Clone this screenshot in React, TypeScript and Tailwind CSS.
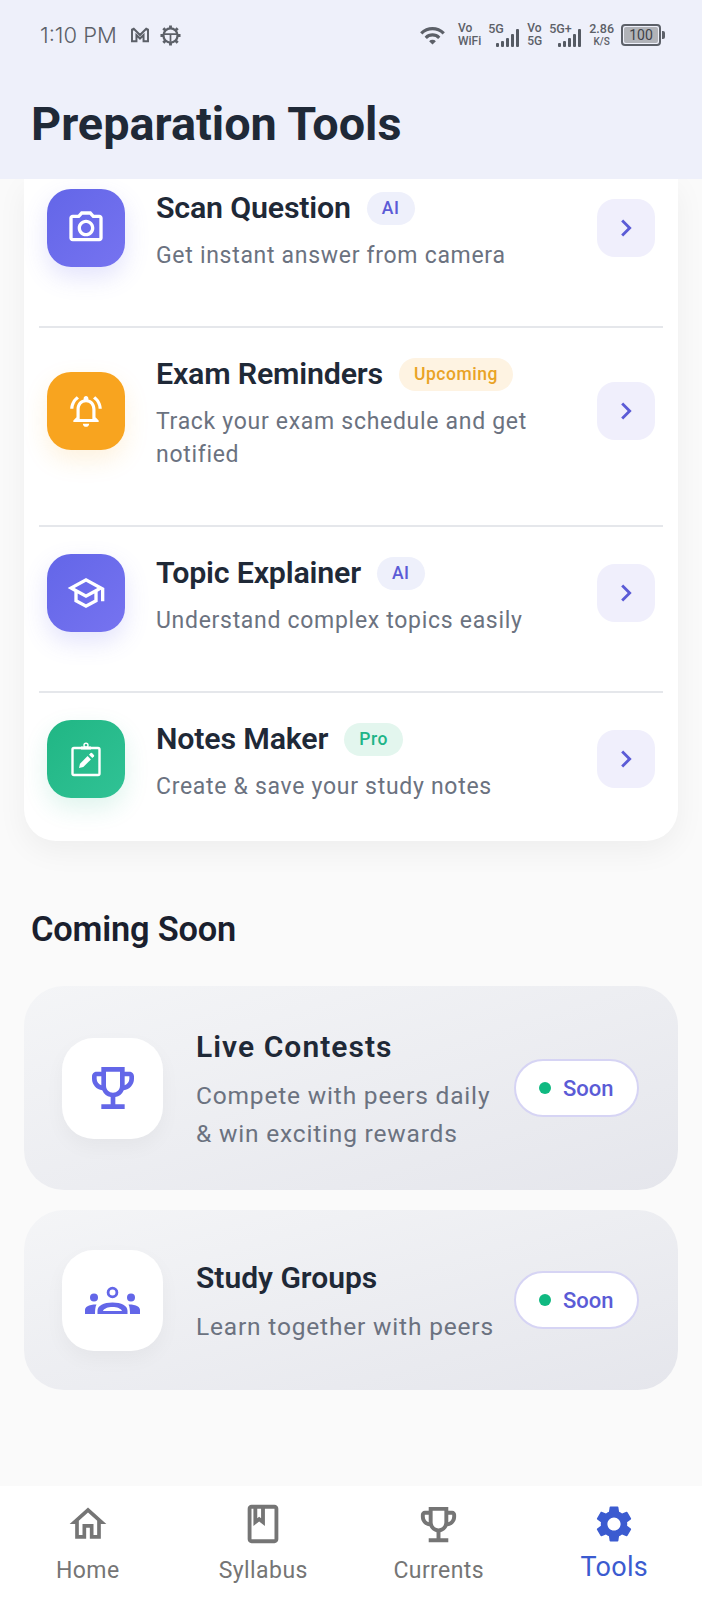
import React from "react";
import { MdOutlineCameraAlt, MdOutlineNotificationsActive, MdOutlineSchool, MdOutlineEmojiEvents, MdOutlineHome, MdOutlineBook, MdSettings, MdChevronRight, MdWifi } from "react-icons/md";

const font = { fontFamily: "Roboto, 'Liberation Sans', sans-serif" };

function NotesIcon() {
  return (
    <svg width="34" height="36" viewBox="0 0 34 36" fill="none" stroke="white" strokeWidth="2.4">
      <rect x="3.5" y="7" width="27" height="27" rx="1.5" />
      <path d="M12 7h10" strokeWidth="3" />
      <circle cx="17" cy="4.2" r="2" strokeWidth="1.4" />
      <path d="M10 27l1-4.3 7.6-7.6 3.3 3.3-7.6 7.6z" fill="white" stroke="none" />
      <path d="M20 13.7l1.6-1.6a1 1 0 0 1 1.4 0l1.9 1.9a1 1 0 0 1 0 1.4l-1.6 1.6z" fill="white" stroke="none" />
    </svg>
  );
}

function GroupsIcon() {
  return (
    <svg width="55" height="28" viewBox="0 0 55 28" fill="#6366e8">
      <circle cx="27.5" cy="6.5" r="4.4" fill="none" stroke="#6366e8" strokeWidth="2.8" />
      <circle cx="9" cy="11.5" r="4" />
      <circle cx="46" cy="11.5" r="4" />
      <path fillRule="evenodd" d="M12.5 28v-3c0-5.5 6-8.500 15-8.500s15 3 15 8.500v3zM18 25h19c-1-2.500-5-4-9.500-4s-8.500 1.500-9.500 4z" />
      <path d="M0 28v-4c0-3 3-5.500 11.500-5.500-1.200 2-1.500 6-1.500 9.500z" />
      <path d="M55 28v-4c0-3-3-5.500-11.500-5.500 1.200 2 1.500 6 1.500 9.500z" />
    </svg>
  );
}

function Signal() {
  return (
    <svg width="24" height="20" viewBox="0 0 24 20" fill="#555a63">
      <rect x="0" y="15" width="3" height="4" rx="1" />
      <rect x="5" y="13" width="3" height="6" rx="1" />
      <rect x="10" y="10" width="3" height="9" rx="1" />
      <rect x="15" y="6" width="3" height="13" rx="1" />
      <rect x="20" y="1" width="3" height="18" rx="1" />
    </svg>
  );
}

function StatusBar() {
  return (
    <div className="flex h-[70px] items-center justify-between pl-[40px] pr-[37px] text-[#5c6068]">
      <div className="flex items-center gap-[13px]">
        <span className="text-[22px] font-light" style={{ fontFamily: "Inter, sans-serif" }}>1:10 PM</span>
        <svg width="20" height="16" viewBox="0 0 22 18" fill="none" stroke="#5c6068" strokeWidth="2.2">
          <path d="M2 16V3l2-1 7 7 7-7 2 1v13h-5V9l-4 4-4-4v7z" />
        </svg>
        <svg width="21" height="21" viewBox="0 0 22 22" fill="none" stroke="#5c6068" strokeWidth="2.4" className="-ml-[3px]">
          <circle cx="11" cy="11" r="7.4" />
          <path d="M11 0.5v3.5M11 18v3.5M0.5 11h3.5M18 11h3.5M3.5 3.5l2.5 2.5M16 16l2.5 2.5M18.5 3.5L16 6M6 16l-2.5 2.5" strokeWidth="3" />
          <path d="M4 9.5h14M11 9.5v8" strokeWidth="1.8" />
        </svg>
      </div>
      <div className="flex items-center gap-[7px]">
        <MdWifi size={27} className="mr-[5px]" />
        <div className="flex flex-col text-[12px] font-medium leading-[13px]"><span>Vo</span><span>WiFi</span></div>
        <div className="relative flex h-[26px] w-[32px] items-start">
          <span className="text-[12.5px] font-medium leading-[14px]">5G</span>
          <div className="absolute bottom-0 right-0"><Signal /></div>
        </div>
        <div className="flex flex-col text-[12px] font-medium leading-[13px]"><span>Vo</span><span>5G</span></div>
        <div className="relative flex h-[26px] w-[33px] items-start">
          <span className="text-[12.5px] font-medium leading-[14px]">5G+</span>
          <div className="absolute bottom-0 right-0"><Signal /></div>
        </div>
        <div className="flex flex-col items-center text-[12.5px] font-medium leading-[13px]"><span>2.86</span><span className="text-[10px]">K/S</span></div>
        <div className="flex items-center gap-[1px]">
          <div className="flex h-[22px] w-[40px] items-center rounded-[4px] border-2 border-[#5c6068] p-[1px]">
            <div className="flex h-full w-full items-center justify-center rounded-[2px] bg-[#b1b3b8] text-[14px] leading-none text-[#3f4248]">100</div>
          </div>
          <div className="h-[8px] w-[3px] rounded-r-[2px] bg-[#5c6068]" />
        </div>
      </div>
    </div>
  );
}

function Badge({ label, cls }: { label: string; cls: string }) {
  return <span className={`flex h-[33px] items-center rounded-full px-[15px] text-[17.5px] font-medium tracking-[0.55px] ${cls}`}>{label}</span>;
}

function ToolRow({ icon, iconCls, title, badge, badgeCls, desc, rowCls }: {
  icon: React.ReactNode; iconCls: string; title: string; badge: string; badgeCls: string; desc: React.ReactNode; rowCls: string;
}) {
  return (
    <div className={`flex items-center px-[8px] ${rowCls}`}>
      <div className={`flex h-[78px] w-[78px] shrink-0 items-center justify-center rounded-[24px] ${iconCls}`}>{icon}</div>
      <div className="ml-[31px] flex min-w-0 flex-1 flex-col gap-[13px] pt-[6px]">
        <div className="flex h-[36px] items-center gap-[16px]">
          <span className="text-[30.4px] font-semibold leading-none tracking-[-0.2px] text-[#1f2937]">{title}</span>
          <Badge label={badge} cls={badgeCls} />
        </div>
        <div className="text-[23px] leading-[33px] tracking-[0.7px] text-[#6b7280]">{desc}</div>
      </div>
      <div className="flex h-[58px] w-[58px] shrink-0 items-center justify-center rounded-[18px] bg-[#f0effc] text-[#5b5bd6]">
        <MdChevronRight size={34} />
      </div>
    </div>
  );
}

function SoonCard({ icon, title, desc, cardCls, titleCls }: { icon: React.ReactNode; title: string; desc: React.ReactNode; cardCls: string; titleCls: string }) {
  return (
    <div className={`flex items-center rounded-[40px] bg-gradient-to-br from-[#f4f5f7] to-[#e5e6ec] pl-[38px] pr-[39px] ${cardCls}`}>
      <div className="flex h-[101px] w-[101px] shrink-0 items-center justify-center rounded-[32px] bg-white shadow-[0_8px_20px_rgba(0,0,0,0.04)]">{icon}</div>
      <div className="ml-[33px] flex min-w-0 flex-1 flex-col pt-[4px]">
        <span className={`text-[30px] font-semibold leading-[38px] text-[#1f2937] ${titleCls}`}>{title}</span>
        <div className="mt-[11px] text-[24.5px] leading-[37.5px] tracking-[0.82px] text-[#6b7280]">{desc}</div>
      </div>
      <div className="flex h-[58px] w-[125px] shrink-0 items-center gap-[12px] rounded-full border-2 border-[#d6d4f4] bg-white pl-[23px]">
        <span className="h-[12px] w-[12px] rounded-full bg-[#10b981]" />
        <span className="text-[22px] font-medium text-[#5b5bd6]">Soon</span>
      </div>
    </div>
  );
}

function NavItem({ icon, label, active }: { icon: React.ReactNode; label: string; active?: boolean }) {
  return (
    <div className={`flex flex-1 flex-col items-center ${active ? "text-[#3b5bd0]" : "text-[#757575]"}`}>
      <div className="flex h-[46px] items-center justify-center">{icon}</div>
      <span className={active ? "mt-[4px] text-[27px] leading-[32px] tracking-[0.3px]" : "mt-[10px] text-[23px] leading-[28px] tracking-[0.42px]"}>{label}</span>
    </div>
  );
}

export default function App() {
  return (
    <div className="flex h-[1600px] w-[702px] flex-col overflow-hidden bg-[#fafafa]" style={font}>
      <header className="h-[179px] shrink-0 bg-[#eef0fa]">
        <StatusBar />
        <h1 className="ml-[31px] mt-[27px] text-[46.8px] font-bold leading-[54px] text-[#1f2937]">Preparation Tools</h1>
      </header>

      <main className="flex-1 overflow-hidden px-[24px]">
        <section className="rounded-b-[32px] bg-white px-[15px] pb-[38px] shadow-[0_10px_30px_rgba(0,0,0,0.05)]">
          <ToolRow
            rowCls="pt-[5px] pb-[54px] border-b-2 border-[#e5e7eb]"
            icon={<MdOutlineCameraAlt size={40} color="white" />}
            iconCls="bg-gradient-to-br from-[#6366e8] to-[#7673f0] shadow-[0_10px_24px_rgba(99,102,241,0.18)]"
            title="Scan Question" badge="AI" badgeCls="bg-[#eef0fb] text-[#5b5bd6]"
            desc="Get instant answer from camera"
          />
          <ToolRow
            rowCls="pt-[22px] pb-[54px] border-b-2 border-[#e5e7eb]"
            icon={<MdOutlineNotificationsActive size={38} color="white" />}
            iconCls="bg-[#f8a41f] shadow-[0_10px_24px_rgba(249,165,31,0.15)]"
            title="Exam Reminders" badge="Upcoming" badgeCls="bg-[#fef3e2] text-[#e9a326]"
            desc={<>Track your exam schedule and get<br />notified</>}
          />
          <ToolRow
            rowCls="pt-[22px] pb-[54px] border-b-2 border-[#e5e7eb]"
            icon={<MdOutlineSchool size={40} color="white" />}
            iconCls="bg-gradient-to-br from-[#6366e8] to-[#7673f0] shadow-[0_10px_24px_rgba(99,102,241,0.18)]"
            title="Topic Explainer" badge="AI" badgeCls="bg-[#eef0fb] text-[#5b5bd6]"
            desc="Understand complex topics easily"
          />
          <ToolRow
            rowCls="pt-[22px]"
            icon={<NotesIcon />}
            iconCls="bg-gradient-to-br from-[#20b684] to-[#30c295] shadow-[0_10px_24px_rgba(32,182,132,0.15)]"
            title="Notes Maker" badge="Pro" badgeCls="bg-[#e3f6ee] text-[#20b487]"
            desc="Create & save your study notes"
          />
        </section>

        <h2 className="ml-[7px] mt-[67px] text-[34.4px] font-semibold leading-[42px] tracking-[-0.2px] text-[#1a1f2e]">Coming Soon</h2>

        <div className="mt-[36px] flex flex-col gap-[20px]">
          <SoonCard
            cardCls="h-[204px]" titleCls="tracking-[1.05px]"
            icon={<MdOutlineEmojiEvents size={56} color="#6366e8" />}
            title="Live Contests"
            desc={<>Compete with peers daily<br />&amp; win exciting rewards</>}
          />
          <SoonCard
            cardCls="h-[180px]" titleCls=""
            icon={<GroupsIcon />}
            title="Study Groups"
            desc="Learn together with peers"
          />
        </div>
      </main>

      <nav className="flex h-[114px] shrink-0 items-start bg-white pt-[15px]">
        <NavItem icon={<MdOutlineHome size={44} />} label="Home" />
        <NavItem icon={<MdOutlineBook size={46} />} label="Syllabus" />
        <NavItem icon={<MdOutlineEmojiEvents size={47} />} label="Currents" />
        <NavItem icon={<MdSettings size={44} />} label="Tools" active />
      </nav>
    </div>
  );
}
